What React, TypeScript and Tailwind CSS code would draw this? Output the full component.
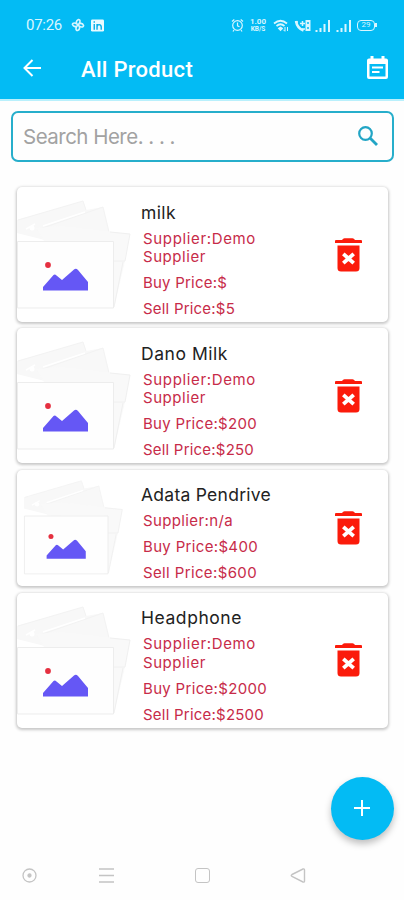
import React from 'react';

type Product = { name: string; supplier: string[]; buy: string; sell: string; widths: number[] };

const products: Product[] = [
  { name: 'milk', supplier: ['Supplier:Demo', 'Supplier'], buy: '$', sell: '$5', widths: [35, 113, 63, 84, 92] },
  { name: 'Dano Milk', supplier: ['Supplier:Demo', 'Supplier'], buy: '$200', sell: '$250', widths: [87, 113, 63, 114, 111] },
  { name: 'Adata Pendrive', supplier: ['Supplier:n/a'], buy: '$400', sell: '$600', widths: [130, 90, 115, 114] },
  { name: 'Headphone', supplier: ['Supplier:Demo', 'Supplier'], buy: '$2000', sell: '$2500', widths: [101, 113, 63, 124, 121] },
];

/* Spreads the letters of a line so that it fills a fixed measure. */
function Fit({ text, width, className = '' }: { text: string; width: number; className?: string }) {
  const ref = React.useRef<HTMLSpanElement>(null);
  const [spacing, setSpacing] = React.useState(0);
  React.useLayoutEffect(() => {
    const el = ref.current;
    if (el) setSpacing((width - el.getBoundingClientRect().width) / text.length);
  }, [text, width]);
  return (
    <span className={`block ${className}`}>
      <span ref={ref} className="inline-block whitespace-nowrap" style={{ letterSpacing: `${spacing}px` }}>{text}</span>
    </span>
  );
}

function Placeholder({ small }: { small: boolean }) {
  return (
    <svg className="block h-full w-[118px] shrink-0" viewBox={small ? '0 0 118 116' : '0 0 118 135'} preserveAspectRatio="xMinYMin" fill="none">
      <g transform={small ? 'translate(7 -1.4) scale(.87)' : undefined}>
        <path d="M0 33 66 14 69 23 86 20 92 45 36 55 0 46Z" fill="#f8f8f8" />
        <path d="M1 33 66 14 69 23M20 43 86 20 92 45" stroke="#f3f3f3" />
        <path d="M9 42 18 37M26 39 68 25" stroke="#fff" strokeWidth="1.5" />
        <circle cx="15" cy="41" r="2.5" fill="#fff" />
        <path d="M19 41 45 39 113 47 108 74 97 121H92V54H27Z" fill="#f9f9f9" />
        <path d="M93 45 113 47 108 74H97M106 75 97 120" stroke="#f0f0f0" />
        <path d="M.5 54.5H96.5V121H.5Z" fill="#fefefe" stroke="#ededed" />
        <circle cx="31" cy="78" r="2.9" fill="#e53040" />
        <path d="M26 103.500V100L36.500 88Q38 87 39.500 88.500L45 93 57 82.500Q59 81 61 83L71 95V103.500Z" fill="#6557f5" />
      </g>
    </svg>
  );
}

function Trash() {
  return (
    <svg className="h-[34px] w-[27px] shrink-0" viewBox="0 0 27 34">
      <path d="M0 3Q0 2 1 2H7Q8 .3 9.500 .3H17.500Q19 .3 20 2H26Q27 2 27 3V5H0Z" fill="#fb1b0b" />
      <path d="M2.500 7.500H24.500V30Q24.500 33.500 21 33.500H6Q2.500 33.500 2.500 30Z" fill="#fb1b0b" />
      <path d="m8.300 15.800 10.400 9.400m0-9.400-10.400 9.400" stroke="#fff" strokeWidth="3.800" />
    </svg>
  );
}

function Card({ p }: { p: Product }) {
  const small = p.supplier.length === 1;
  const lines = [...p.supplier, `Buy Price:${p.buy}`, `Sell Price:${p.sell}`];
  return (
    <article className={`flex rounded-[5px] bg-white shadow-[0_1px_3px_1px_rgba(0,0,0,0.22)] ${small ? 'h-[116.5px]' : 'h-[135px]'}`}>
      <Placeholder small={small} />
      <div className="w-[200px] shrink-0 pl-[6px] pt-[13.5px]">
        <Fit text={p.name} width={p.widths[0]} className="mb-[5px] text-[17.5px] leading-6 text-[#222]" />
        {lines.map((line, i) => (
          <Fit
            key={line}
            text={line}
            width={p.widths[i + 1]}
            className={`pl-[2px] text-[15px] leading-[18.5px] text-[#c72b49] ${i >= p.supplier.length ? 'mt-[7.5px]' : ''}`}
          />
        ))}
      </div>
      <div className="flex items-center">
        <Trash />
      </div>
    </article>
  );
}

function Signal() {
  return (
    <svg className="h-[13px] w-[16px]" viewBox="0 0 16 13" stroke="#d9f6ff" strokeWidth="2">
      <path d="M1.500 13v-2M5.500 13V9M9.500 13V5M14 13V1" />
    </svg>
  );
}

export default function App() {
  return (
    <div className="flex h-[900px] w-[404px] flex-col bg-[#fefefe] font-['Inter','Noto_Sans',sans-serif]">
      <header className="h-[99px] shrink-0 bg-[#03bbf4] font-['Roboto',sans-serif] text-white">
        <div className="flex h-[50px] items-center pl-[26px] text-[#d9f6ff]">
          <Fit text="07:26" width={36} className="w-[45px] text-[15px] leading-5" />
          <svg className="h-[14px] w-[14px]" viewBox="0 0 14 14" fill="none" stroke="currentColor" strokeWidth="1.6">
            <path d="M7 7C4 6 4 3 6 1.500 8 1 9 4 7 7ZM7 7C8 4 11 4 12.500 6 13 8 10 9 7 7ZM7 7C10 8 10 11 8 12.500 6 13 5 10 7 7ZM7 7C6 10 3 10 1.500 8 1 6 4 5 7 7Z" transform="rotate(15 7 7)" />
          </svg>
          <svg className="ml-[6px] h-[13px] w-[13px]" viewBox="0 0 14 13">
            <rect width="14" height="13" rx="1.500" fill="#e8faff" />
            <path d="M3.500 5v6M3.500 2v1.600M6.500 11V5M6.500 8Q6.500 5.500 8.700 5.500T11 8v3" fill="none" stroke="#03aeea" strokeWidth="1.500" />
          </svg>
          <svg className="ml-[127px] h-[14px] w-[13px]" viewBox="0 0 13 14" fill="none" stroke="currentColor" strokeWidth="1.200">
            <circle cx="6.500" cy="7.500" r="4.800" />
            <path d="M6.500 4.500v3.300l2 1M1 3.500 3.300 1.500M12 3.500 9.700 1.500M3 12l-1 1.500M10 12l1 1.500" />
          </svg>
          <div className="ml-[5px] w-[18px] text-center font-bold">
            <div className="h-[7px] text-[8px] leading-[7px]">1.00</div>
            <div className="mt-[1px] h-[6px] text-[6.5px] leading-[6px]">KB/S</div>
          </div>
          <svg className="ml-[6px] h-[13px] w-[16px]" viewBox="0 0 16 13" fill="none" stroke="currentColor" strokeWidth="1.700">
            <path d="M1 4.500Q7.500-1 14 4.500M3.500 7Q7.500 3.500 11.500 7M6 9.500 7.500 8.500 9 9.500 7.500 11Z" />
            <path d="M12 8v4m-1.500-1.200L12 12.500M14.500 12V8" strokeWidth="1" />
          </svg>
          <svg className="ml-[5px] h-[13px] w-[17px]" viewBox="0 0 17 13" fill="none" stroke="currentColor" strokeWidth="1.500">
            <path d="M2 2Q3 9 9.500 11.500" strokeWidth="2.500" />
            <path d="M1 3h3M8 10h3M6 4.500h5M8.500 2v5" />
            <rect x="11.500" y="1" width="5" height="11" fill="currentColor" stroke="none" />
            <path d="M13 4h2M13 9h2" stroke="#03bbf4" />
          </svg>
          <div className="ml-[4px] flex gap-[5px]"><Signal /><Signal /></div>
          <div className="ml-[5px] flex h-[11px] w-[18px] items-center justify-center rounded-[4px] border-[1.5px] border-current text-[8px]">29</div>
          <div className="h-[4px] w-[1.500px] bg-current" />
        </div>
        <div className="flex h-[38px] items-center pl-[23px]">
          <svg className="-mt-[2px] h-[18px] w-[18px]" viewBox="0 0 18 18" fill="none" stroke="white" strokeWidth="2">
            <path d="M18 9H2M9.500 1 1.500 9l8 8" />
          </svg>
          <Fit text="All Product" width={112} className="ml-[40px] w-[286px] pt-[1px] text-[22px] font-medium leading-7" />
          <svg className="-mt-1 h-[23px] w-[21px]" viewBox="0 0 21 23">
            <path fillRule="evenodd" clipRule="evenodd" d="M3.500 0h3v2.500h8V0h3v2.500H19q2 0 2 2V21q0 2-2 2H2q-2 0-2-2V4.500q0-2 2-2h1.500ZM2.500 8v12.500h16V8Z" fill="#fff" />
            <path d="M5 11.500h11M5 16h7.500" stroke="#fff" strokeWidth="2" />
          </svg>
        </div>
      </header>
      <div className="h-[2px] shrink-0 bg-[#b9f0fc]" />

      <div className="mx-[11px] mt-[10px] flex h-[51px] w-[383px] shrink-0 items-center rounded-[7px] border-2 border-[#27aecb] pl-[10px]">
        <Fit text="Search Here. . . ." width={152} className="w-[335px] text-[20.5px] leading-7 text-[#a2a2a2]" />
        <svg className="-mt-[1px] h-[20px] w-[20px]" viewBox="0 0 20 20" fill="none" stroke="#22a5c5">
          <circle cx="7.500" cy="7.500" r="6.300" strokeWidth="2.200" />
          <path d="m12 12 7 7" strokeWidth="2.800" />
        </svg>
      </div>

      <main className="ml-[17px] mt-[25px] flex w-[371px] flex-col gap-[6.400px]">
        {products.map((p) => <Card key={p.name} p={p} />)}
      </main>

      <button aria-label="Add product" className="ml-[330.500px] mt-[49px] flex h-[63px] w-[63px] shrink-0 items-center justify-center rounded-full bg-[#03bbf4] shadow-[0_4px_7px_rgba(0,0,0,0.25)]">
        <svg className="h-4 w-4" viewBox="0 0 16 16" stroke="#fff" strokeWidth="2"><path d="M8 0v16M0 8h16" /></svg>
      </button>

      <nav className="mt-auto flex h-[49px] shrink-0 items-center pl-[21.500px] text-[#c4c4c4]">
        <svg className="h-[15px] w-[15px]" viewBox="0 0 15 15" fill="none" stroke="currentColor" strokeWidth="1.300">
          <circle cx="7.500" cy="7.500" r="6.500" /><circle cx="7.500" cy="7.500" r="1.500" fill="currentColor" />
        </svg>
        <svg className="ml-[62px] h-[15px] w-[15px]" viewBox="0 0 15 15" stroke="currentColor" strokeWidth="1.500">
          <path d="M0 1h15M0 7.500h15M0 14h15" />
        </svg>
        <div className="ml-[81.500px] h-[15px] w-[15px] rounded-[3px] border-[1.5px] border-current" />
        <svg className="ml-[80px] h-[15px] w-[16px]" viewBox="0 0 16 15" fill="none" stroke="currentColor" strokeWidth="1.400">
          <path d="M2 6.500 13 1Q14.500 .5 14.500 2v11q0 1.500-1.500 1L2 8.500Q.5 7.500 2 6.500Z" />
        </svg>
      </nav>
    </div>
  );
}
